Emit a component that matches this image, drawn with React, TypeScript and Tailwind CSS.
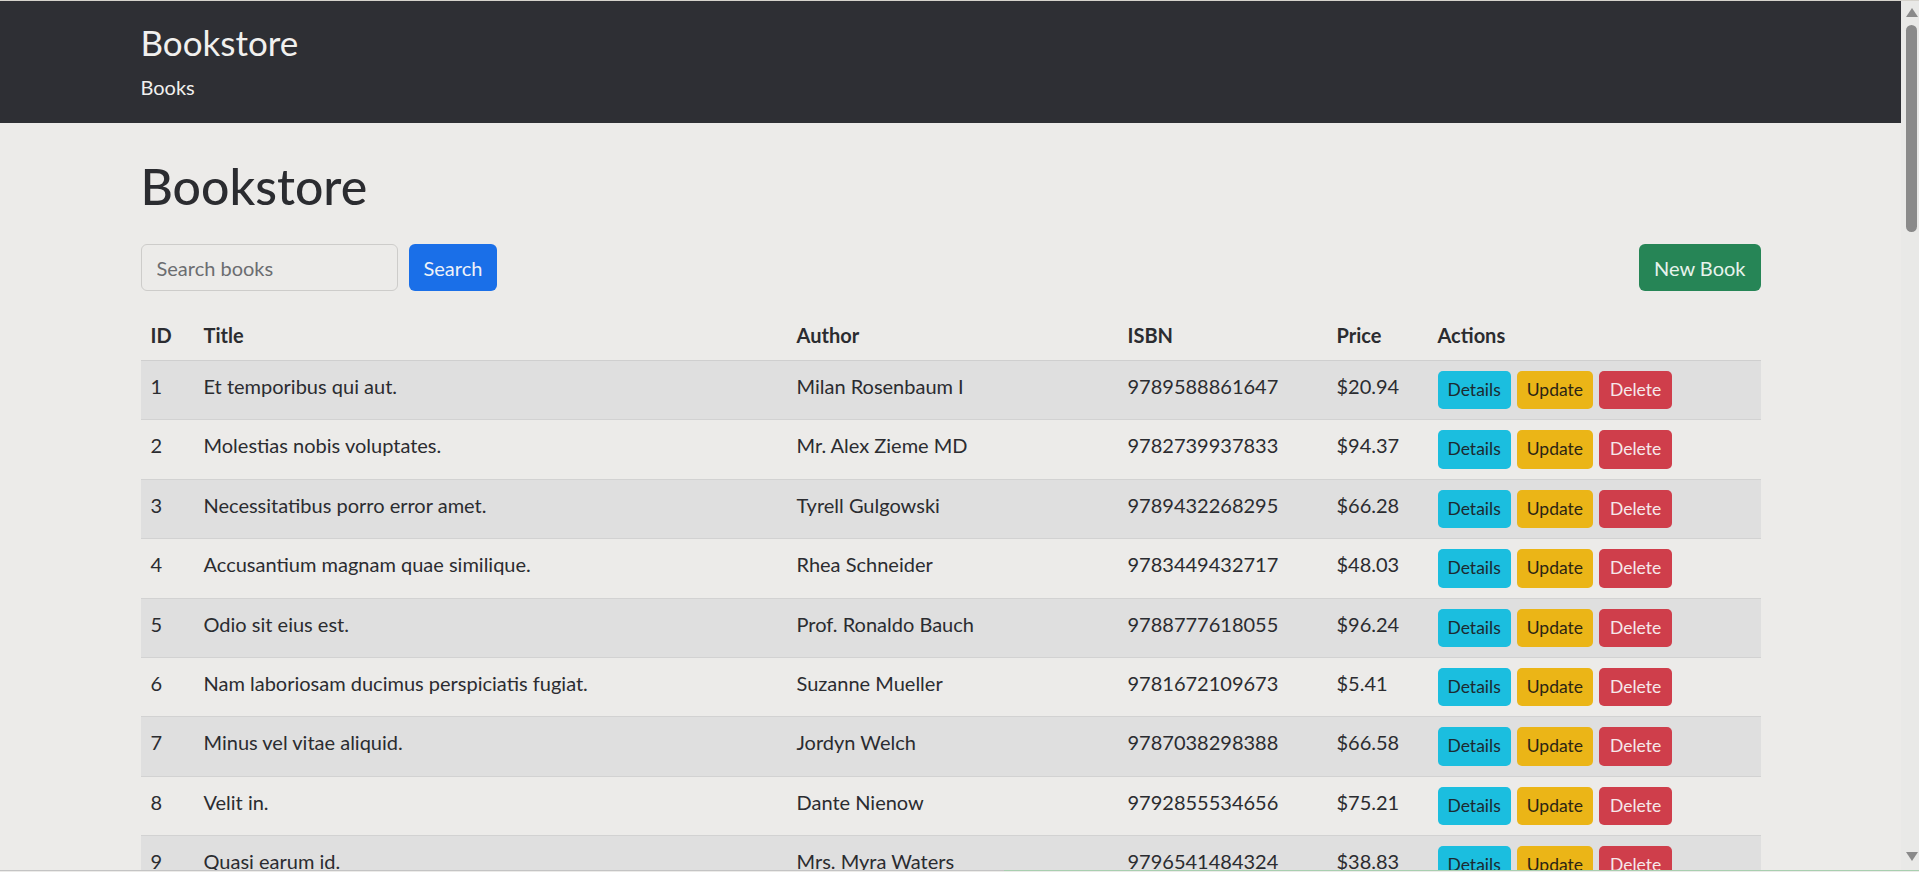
import React from 'react';

interface Book {
  id: number
  title: string
  author: string
  isbn: string
  price: string
}

const books: Book[] = [
  { id: 1, title: "Et temporibus qui aut.", author: "Milan Rosenbaum I", isbn: "9789588861647", price: "$20.94" },
  { id: 2, title: "Molestias nobis voluptates.", author: "Mr. Alex Zieme MD", isbn: "9782739937833", price: "$94.37" },
  { id: 3, title: "Necessitatibus porro error amet.", author: "Tyrell Gulgowski", isbn: "9789432268295", price: "$66.28" },
  { id: 4, title: "Accusantium magnam quae similique.", author: "Rhea Schneider", isbn: "9783449432717", price: "$48.03" },
  { id: 5, title: "Odio sit eius est.", author: "Prof. Ronaldo Bauch", isbn: "9788777618055", price: "$96.24" },
  { id: 6, title: "Nam laboriosam ducimus perspiciatis fugiat.", author: "Suzanne Mueller", isbn: "9781672109673", price: "$5.41" },
  { id: 7, title: "Minus vel vitae aliquid.", author: "Jordyn Welch", isbn: "9787038298388", price: "$66.58" },
  { id: 8, title: "Velit in.", author: "Dante Nienow", isbn: "9792855534656", price: "$75.21" },
  { id: 9, title: "Quasi earum id.", author: "Mrs. Myra Waters", isbn: "9796541484324", price: "$38.83" },
]

function Scrollbar() {
  return (
    <div className="w-[18px] bg-[#e9e9e7] flex flex-col items-center">
      <svg width="12" height="10" viewBox="0 0 12 10" className="mt-[7px] ml-[3px]">
        <polygon points="6,0 12,9 0,9" fill="#8a8a8a" />
      </svg>
      <div className="mt-[7px] ml-[3px] w-[11px] h-[207px] rounded-full bg-[#8a8a8a]" />
      <div className="flex-1" />
      <svg width="12" height="10" viewBox="0 0 12 10" className="mb-[8px] ml-[3px]">
        <polygon points="0,0 12,0 6,9" fill="#8a8a8a" />
      </svg>
    </div>
  )
}

export default function App() {
  return (
    <div className="h-[872px] overflow-hidden flex flex-col bg-[#ecebe9] font-['Lato','Liberation_Sans',sans-serif] text-[#2b2c30]">
      <div className="h-[1px] bg-[#d6d3cc]" />
      <div className="flex-1 flex overflow-hidden">
        <div className="flex-1 overflow-hidden">
          {/* Navbar */}
          <div className="h-[122px] bg-[#2e2f34]">
            <div className="w-[1620px] mx-auto flex flex-col">
              <a className="mt-[16px] text-[35px] leading-[51px] text-[#f1f0ee]">Bookstore</a>
              <a className="mt-[4px] text-[20px] leading-[30px] text-[#f1f0ee]">Books</a>
            </div>
          </div>

          <div className="w-[1620px] mx-auto">
            <h1 className="mt-[33px] text-[50px] leading-[60px] font-medium text-[#2b2c30]">Bookstore</h1>

            <div className="mt-[28px] flex items-center justify-between">
              <div className="flex gap-[11px]">
                <input
                  placeholder="Search books"
                  className="w-[257px] h-[47px] px-[15px] text-[20px] rounded-[6px] border border-[#cdccca] bg-[#ecebe9] placeholder:text-[#6b6d70] outline-none"
                />
                <button className="h-[47px] px-[15px] text-[20px] rounded-[6px] bg-[#1a6fe8] text-[#eef2f8]">Search</button>
              </div>
              <button className="h-[47px] px-[15px] text-[20px] rounded-[6px] bg-[#268556] text-[#e6f3ec]">New Book</button>
            </div>

            <table className="mt-[19px] w-[1620px] table-fixed border-collapse text-[20px]">
              <colgroup>
                <col className="w-[53px]" />
                <col className="w-[593px]" />
                <col className="w-[331px]" />
                <col className="w-[209px]" />
                <col className="w-[101px]" />
                <col className="w-[333px]" />
              </colgroup>
              <thead>
                <tr className="border-b border-[#cfcfcf]">
                  <th className="text-left font-bold px-[10px] py-[10px] leading-[30px]">ID</th>
                  <th className="text-left font-bold px-[10px] py-[10px] leading-[30px]">Title</th>
                  <th className="text-left font-bold px-[10px] py-[10px] leading-[30px]">Author</th>
                  <th className="text-left font-bold px-[10px] py-[10px] leading-[30px]">ISBN</th>
                  <th className="text-left font-bold px-[10px] py-[10px] leading-[30px]">Price</th>
                  <th className="text-left font-bold px-[10px] py-[10px] leading-[30px]">Actions</th>
                </tr>
              </thead>
              <tbody>
                {books.map((b, i) => (
                  <tr key={b.id} className={`border-b border-[#d2d2d2] ${i % 2 === 0 ? "bg-[#dfdfdf]" : "bg-[#ecebe9]"}`}>
                    <td className="align-top px-[10px] py-[10px] leading-[30px]">{b.id}</td>
                    <td className="align-top px-[10px] py-[10px] leading-[30px]">{b.title}</td>
                    <td className="align-top px-[10px] py-[10px] leading-[30px]">{b.author}</td>
                    <td className="align-top px-[10px] py-[10px] leading-[30px]">{b.isbn}</td>
                    <td className="align-top px-[10px] py-[10px] leading-[30px]">{b.price}</td>
                    <td className="align-top px-[10px] py-[10px]">
                      <div className="flex gap-[6px]">
                        <button className="h-[38.4px] px-[10px] text-[17.5px] rounded-[5px] bg-[#1bbedf] text-[#1c2a31]">Details</button>
                        <button className="h-[38.4px] px-[10px] text-[17.5px] rounded-[5px] bg-[#ebb517] text-[#2c2414]">Update</button>
                        <button className="h-[38.4px] px-[11px] text-[17.5px] rounded-[5px] bg-[#cf3e4b] text-[#f6e8ea]">Delete</button>
                      </div>
                    </td>
                  </tr>
                ))}
              </tbody>
            </table>
          </div>
        </div>
        <Scrollbar />
      </div>
      <div className="h-[1px] flex">
        <div className="w-[1004px] bg-[#c4c4c4]" />
        <div className="flex-1 bg-[#a9cfb0]" />
      </div>
      <div className="h-[1px] bg-[#ecebe9]" />
    </div>
  )
}
